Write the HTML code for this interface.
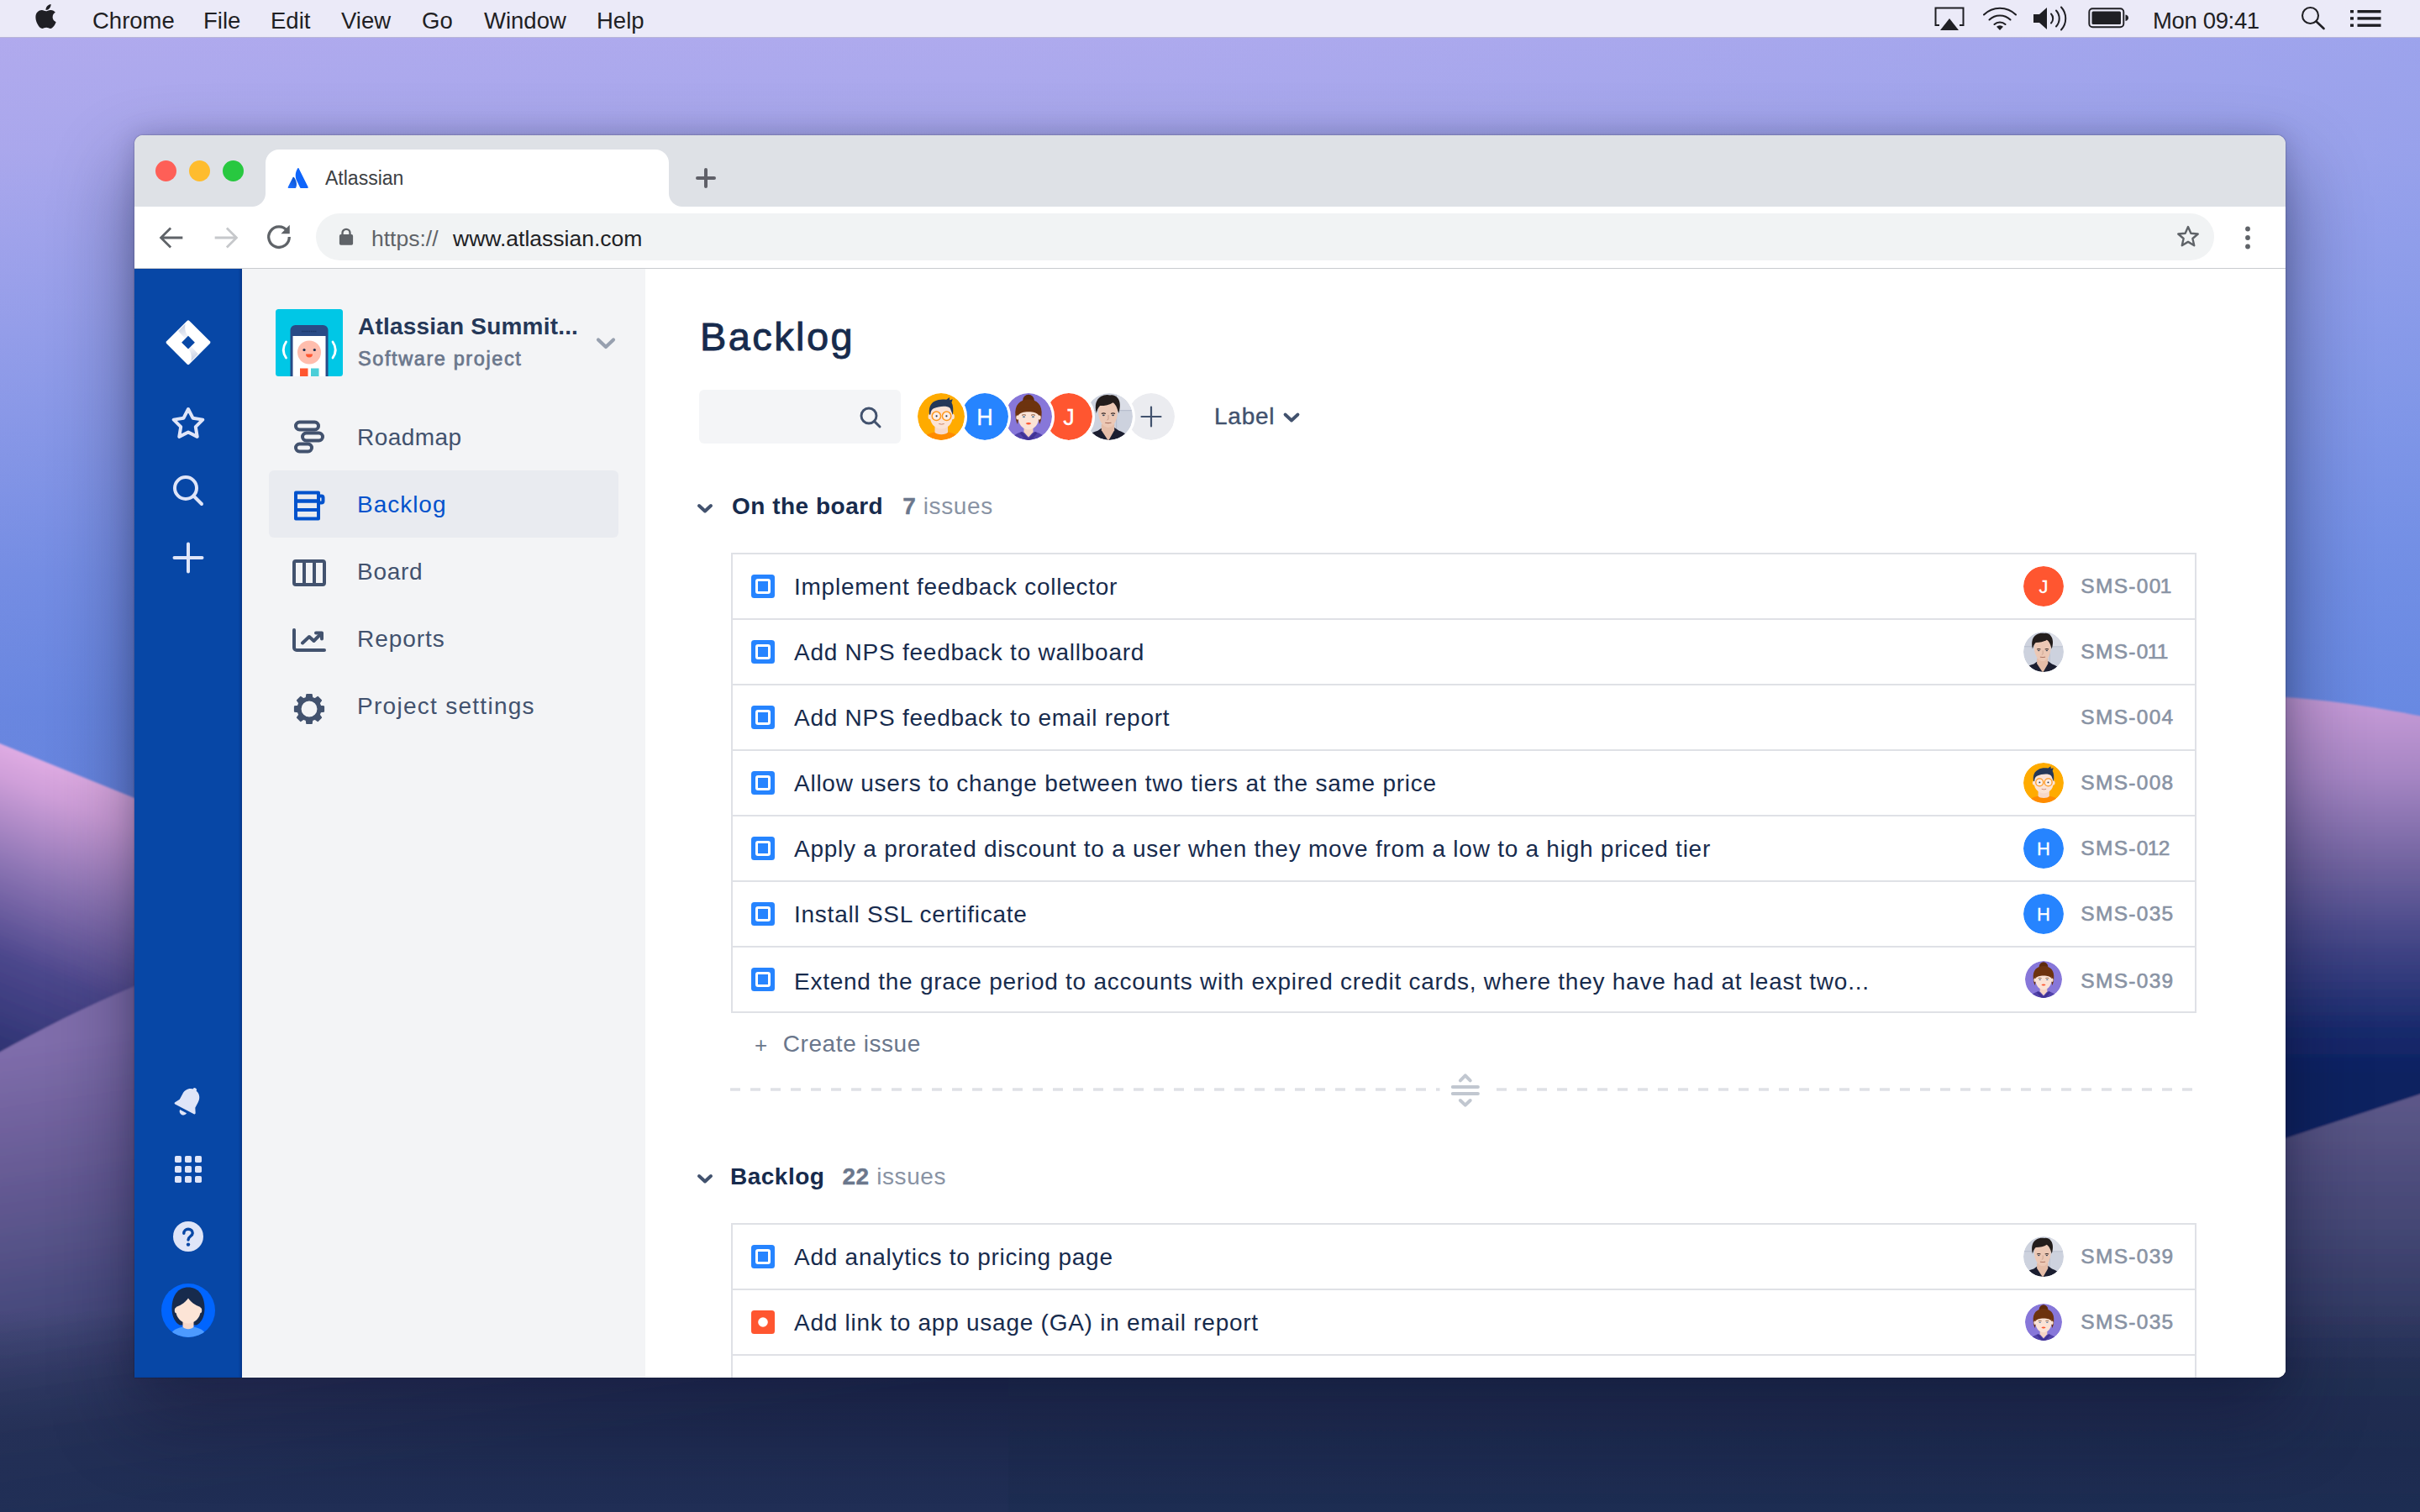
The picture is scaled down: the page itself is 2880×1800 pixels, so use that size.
<!DOCTYPE html>
<html lang="en">
<head>
<meta charset="utf-8">
<title>Atlassian</title>
<style>
*{box-sizing:border-box;margin:0;padding:0}
html,body{width:2880px;height:1800px;overflow:hidden;background:#1c2a4d}
body{font-family:"Liberation Sans",sans-serif;position:relative;color:#172b4d}
.abs{position:absolute}
#wall{position:absolute;left:0;top:0;width:2880px;height:1800px}
/* menubar */
#menubar{position:absolute;left:0;top:0;width:2880px;height:45px;background:#ebeaf8;border-bottom:1px solid #b9b6d8;font-size:27.5px;color:#1f1f24}
#menubar span{position:absolute;top:0;line-height:49px;white-space:nowrap}
/* window */
#win{position:absolute;left:160px;top:161px;width:2560px;height:1479px;border-radius:10px 10px 10px 0;background:#fff;box-shadow:0 44px 90px 6px rgba(14,16,48,.42),0 0 30px rgba(12,14,50,.18),0 0 2px rgba(0,0,0,.45);overflow:hidden}
#tabbar{position:absolute;left:0;top:0;width:2560px;height:85px;background:#dee1e6}
#tab{position:absolute;left:156px;top:17px;width:480px;height:68px;background:#fff;border-radius:16px 16px 0 0}
#tab:before,#tab:after{content:"";position:absolute;bottom:0;width:16px;height:16px}
#tab:before{left:-16px;background:radial-gradient(circle at 0 0,transparent 15.5px,#fff 16.5px)}
#tab:after{right:-16px;background:radial-gradient(circle at 100% 0,transparent 15.5px,#fff 16.5px)}
.tl{position:absolute;top:30px;width:25px;height:25px;border-radius:50%}
#toolbar{position:absolute;left:0;top:85px;width:2560px;height:74px;background:#fff;border-bottom:1px solid #c9cbcf}
#url{position:absolute;left:216px;top:8px;width:2259px;height:56px;border-radius:28px;background:#f1f3f4}
/* page */
#page{position:absolute;left:0;top:159px;width:2560px;height:1320px;background:#fff;overflow:hidden}
#gnav{position:absolute;left:0;top:0;width:128px;height:1320px;background:#0747a6;box-shadow:inset -3px 0 3px -1px rgba(0,20,80,.35)}
#cnav{position:absolute;left:128px;top:0;width:480px;height:1320px;background:#f3f4f6}
#main{position:absolute;left:608px;top:0;width:1952px;height:1320px;background:#fff}

.nv{position:absolute;left:32px;width:416px;height:80px;border-radius:6px;font-size:28px;color:#42526e;letter-spacing:.45px}
.nv span{position:absolute;left:105px;top:0;line-height:81px;white-space:nowrap}
.nv svg{position:absolute;left:24px;top:16px}
.nv.sel{background:#e9ebf0;color:#0052cc}

#main{font-size:28px;letter-spacing:.75px}
.h1{position:absolute;left:65px;top:51px;font-size:47px;line-height:60px;letter-spacing:2.400px;color:#172b4d;-webkit-text-stroke:.9px #172b4d;white-space:nowrap}
.sbox{position:absolute;left:64px;top:144px;width:240px;height:64px;border-radius:6px;background:#f4f5f7}
.avs{position:absolute;top:145px;margin-left:-1px;width:62px;height:62px;border-radius:50%;border:3px solid #fff;background:#fff;overflow:hidden}
.avs svg{display:block;width:56px;height:56px}
.ini{width:56px;height:56px;border-radius:50%;color:#fff;text-align:center;line-height:58px;font-size:27px;letter-spacing:0;-webkit-text-stroke:.3px #fff}
.sec{position:absolute;left:103px;white-space:nowrap;line-height:40px;font-weight:bold;color:#172b4d;letter-spacing:.5px}
.sec i{font-style:normal;font-weight:normal;color:#8993a4;margin-left:23px;letter-spacing:.6px}
.sec i b{color:#6b778c;-webkit-text-stroke:.4px #6b778c;font-weight:bold}
.chev{position:absolute;left:60px}
.tbl{position:absolute;left:102px;width:1744px;border:2px solid #dfe1e6;border-bottom:0}
.row{position:relative;height:78px;border-bottom:2px solid #dfe1e6;white-space:nowrap}
.row .ic{position:absolute;left:22px;top:24px;width:28px;height:28px}
.row .tx{position:absolute;left:73px;top:0;line-height:77px;color:#172b4d}
.row .av{position:absolute;left:1536px;top:14px;width:48px;height:48px;border-radius:50%;overflow:hidden}
.row .av svg{display:block;width:48px;height:48px}
.row .av .ini{width:48px;height:48px;line-height:50px;font-size:22px}
.row .key{position:absolute;left:1604.300px;top:-1px;line-height:77px;font-size:24.500px;color:#8993a4;letter-spacing:1.300px;-webkit-text-stroke:.6px #8993a4}
.row .key i{font-style:normal;margin:0 -1.950px}
.row .av.sm{left:1538px;top:16px;width:44px;height:44px}
.row .av.sm svg{width:44px;height:44px}
</style>
</head>
<body>
<svg id="wall" viewBox="0 0 2880 1800" preserveAspectRatio="none">
<defs>
<linearGradient id="sky" x1="0" y1="0" x2="0" y2="1">
<stop offset="0" stop-color="#b1abee"/><stop offset=".1" stop-color="#a7a7ec"/><stop offset=".25" stop-color="#8698e7"/><stop offset=".38" stop-color="#6888e1"/><stop offset=".47" stop-color="#5a80dd"/><stop offset="1" stop-color="#4f74d4"/>
</linearGradient>
<linearGradient id="tintH" x1="0" y1="0" x2="1" y2="0"><stop offset="0" stop-color="#b9a8ee" stop-opacity=".16"/><stop offset=".4" stop-color="#9aa0ea" stop-opacity="0"/><stop offset="1" stop-color="#7f98ea" stop-opacity=".38"/></linearGradient>
<linearGradient id="hillL" gradientUnits="userSpaceOnUse" x1="0" y1="885" x2="-135" y2="1218">
<stop offset="0" stop-color="#dfabe3"/><stop offset=".1" stop-color="#cf9fd9"/><stop offset=".35" stop-color="#9077b6"/><stop offset=".65" stop-color="#4c478c"/><stop offset="1" stop-color="#29306f"/>
</linearGradient>
<linearGradient id="hillL2" gradientUnits="userSpaceOnUse" x1="0" y1="1250" x2="80" y2="1800">
<stop offset="0" stop-color="#7f6dab"/><stop offset=".25" stop-color="#685c96"/><stop offset=".55" stop-color="#494b7e"/><stop offset=".75" stop-color="#343d69"/><stop offset="1" stop-color="#232f57"/>
</linearGradient>
<linearGradient id="domeR" gradientUnits="userSpaceOnUse" x1="0" y1="830" x2="0" y2="1360">
<stop offset="0" stop-color="#c89cd8"/><stop offset=".18" stop-color="#a585c3"/><stop offset=".38" stop-color="#70639f"/><stop offset=".57" stop-color="#3f4384"/><stop offset=".74" stop-color="#1a2b6d"/><stop offset=".85" stop-color="#0b2161"/><stop offset="1" stop-color="#0b2262"/>
</linearGradient>
<linearGradient id="hillR2" gradientUnits="userSpaceOnUse" x1="0" y1="1290" x2="0" y2="1800">
<stop offset="0" stop-color="#5f598b"/><stop offset=".35" stop-color="#434673"/><stop offset=".68" stop-color="#253157"/><stop offset="1" stop-color="#18294b"/>
</linearGradient>
<linearGradient id="bot" x1="0" y1="0" x2="0" y2="1">
<stop offset="0" stop-color="#1c2747" stop-opacity="0"/><stop offset=".6" stop-color="#1d2a4e" stop-opacity=".6"/><stop offset="1" stop-color="#1f2e55" stop-opacity=".75"/>
</linearGradient>
<filter id="b6" x="-5%" y="-5%" width="110%" height="110%"><feGaussianBlur stdDeviation="1.2"/></filter>
</defs>
<rect width="2880" height="1800" fill="url(#sky)"/><rect width="2880" height="1000" fill="url(#tintH)"/>
<g filter="url(#b6)">
<path d="M-40 869 L160 950 L1500 1494 L1500 1900 L-40 1900Z" fill="url(#hillL)"/>
<path d="M1400 1300 C1700 950 2300 800 2720 830 C2800 836 2850 846 2940 864 L2940 1900 L1400 1900Z" fill="url(#domeR)"/>
<path d="M-40 1275 C20 1240 90 1203 160 1174 C400 1080 1000 1040 1500 1200 L1500 1900 L-40 1900Z" fill="url(#hillL2)"/>
<path d="M1200 1560 C1900 1560 2500 1440 2720 1355 L2940 1283 L2940 1900 L1200 1900Z" fill="url(#hillR2)"/>
</g>
<rect x="0" y="1560" width="2880" height="240" fill="url(#bot)"/>
</svg>

<svg width="0" height="0" style="position:absolute">
<defs>
<clipPath id="c56"><circle cx="28" cy="28" r="28"/></clipPath>
<symbol id="av-glasses" viewBox="0 0 56 56">
 <g clip-path="url(#c56)">
 <rect width="56" height="56" fill="#ffab00"/>
 <path d="M6 56c1-6 8-8 14-9.500h17c6 1.500 13 3.500 14 9.500z" fill="#ff8b00"/>
 <path d="M20.500 38v8.500c2 3.500 13.500 3.500 15.500 0V38z" fill="#f7d9cb"/>
 <ellipse cx="14.800" cy="28" rx="2.200" ry="3.200" fill="#fbe3d6"/><ellipse cx="41.700" cy="28" rx="2.200" ry="3.200" fill="#fbe3d6"/>
 <path d="M15 22c0-8 6-11 13.300-11S41.500 14 41.500 22v7c0 8-6.500 13.500-13.200 13.500S15 37 15 29z" fill="#fbe3d6"/>
 <path d="M14.200 26c-1.500-8 1-14 6.500-16.500 3-2 9-2.500 13.500-1.800l3.800-2.700.2 3.300 3.500-1-1.200 4c1.800 3.200 2.300 8.700 1.400 14.700l-2.200-5.500c-.5-2.500-2-3.700-4.200-4.200-5-1-11-.2-16.500 2-2.500 1.200-3.400 3.700-3.600 7z" fill="#253858"/>
 <circle cx="22.400" cy="27.300" r="5.200" fill="#fff" fill-opacity=".35" stroke="#ff991f" stroke-width="1.500"/><circle cx="34.600" cy="27.300" r="5.200" fill="#fff" fill-opacity=".35" stroke="#ff991f" stroke-width="1.500"/>
 <circle cx="22.600" cy="27.300" r="1.100" fill="#253858"/><circle cx="34.400" cy="27.300" r="1.100" fill="#253858"/>
 <path d="M25.300 36.500q3.200 1.300 6.400 0" fill="none" stroke="#c9826b" stroke-width="1"/>
 </g>
</symbol>
<symbol id="av-bun" viewBox="0 0 56 56">
 <g clip-path="url(#c56)">
 <rect width="56" height="56" fill="#8777d9"/>
 <circle cx="28" cy="8.500" r="6.800" fill="#5e2a0c"/>
 <path d="M12.500 27C11 14 18 7.500 28 7.500S45 14 43.500 27c0 4-1.200 7.500-2.500 10l-1.500-9h-23L15 37c-1.300-2.500-2.500-6-2.500-10z" fill="#6d330f"/>
 <path d="M8 56c1-6 6-8 12-10l8 2 8-2c6 2 11 4 12 10z" fill="#5243aa"/>
 <path d="M22.500 39v7.500l5.500 6 5.500-6V39z" fill="#f5d3c4"/>
 <ellipse cx="15" cy="29" rx="1.800" ry="2.800" fill="#fbe3d6"/><ellipse cx="41" cy="29" rx="1.800" ry="2.800" fill="#fbe3d6"/>
 <path d="M16 24c2-3 6-4 12-4s10 1 12 4v6c0 8-6 13.500-12 13.500S16 38 16 30z" fill="#fbe3d6"/>
 <path d="M15.500 26.500c0-6 3-9.500 12.500-9.500s12.500 3.500 12.500 9.500c-3-3-6-4.300-12.500-4.300s-9.500 1.300-12.500 4.300z" fill="#6d330f"/>
 <ellipse cx="22.500" cy="28.300" rx="1.600" ry="1" fill="#5e7fa0"/><ellipse cx="33.500" cy="28.300" rx="1.600" ry="1" fill="#5e7fa0"/>
 <path d="M20 26.300q2.500-1.300 5 0M31 26.300q2.500-1.300 5 0" fill="none" stroke="#6d330f" stroke-width=".8"/>
 <path d="M24.600 36q3.400-2 6.800 0-3.400 3-6.800 0z" fill="#ff5630"/>
 <path d="M20 46l8 8 8-8 2.500 1.500-7 8.500h-7l-7-8.500z" fill="#403294"/>
 </g>
</symbol>
<symbol id="av-photo" viewBox="0 0 56 56">
 <g clip-path="url(#c56)">
 <rect width="56" height="56" fill="#cdd2de"/>
 <path d="M0 20h56v1.200H0zM36 0h1.200v56H36z" fill="#b9bfce"/><path d="M37 0h19v20H37z" fill="#dadde6"/>
 <g transform="translate(-1.500,0) translate(28 3) scale(1.1) translate(-28 -3)"><path d="M2 56c0-8 6-12.500 15-15l5-3.500h13l5 3.500c7 2 12 7 13 15z" fill="#1b1e30"/>
 <path d="M21 34v6.500l7.500 11.500 6.500-11.500V34z" fill="#e5bda8"/>
 <path d="M17.500 21c0-9 4-13.500 10.800-13.500S39 12 38.500 21c-.3 5-1.300 8.500-3 11.500-1.800 3-4.400 5-7.200 5s-5.600-2-7.400-5c-1.800-3-3.100-6.500-3.400-11.500z" fill="#ecc8b5"/>
 <path d="M15.500 22c-2-8-.5-15 5-18 3-2 7-2.500 10-1.500 2.500-.8 6 .3 8 3 3 3.500 3.300 9.500 1.200 16.500l-1.700-5c-1-3-2.500-5-4.500-6.500-3.500 2.500-8.500 3.500-14 3.500-2 1.800-3 4.500-4 8z" fill="#231d1c"/>
 <path d="M21 22.500q2.300-1 4.600 0M31.200 22.500q2.300-1 4.600 0" fill="none" stroke="#3a2a25" stroke-width="1.100"/>
 <ellipse cx="23.300" cy="24.200" rx="1.300" ry=".8" fill="#3a4658"/><ellipse cx="33.500" cy="24.200" rx="1.300" ry=".8" fill="#3a4658"/><path d="M25 32.300q3.300.8 6.600 0" fill="none" stroke="#a8705f" stroke-width="1"/>
 <path d="M28.500 24v4.500l-1.500 1" fill="none" stroke="#c99f8c" stroke-width=".9"/></g>
 </g>
</symbol>
<symbol id="av-me" viewBox="0 0 64 64">
 <clipPath id="c64"><circle cx="32" cy="32" r="32"/></clipPath>
 <g clip-path="url(#c64)">
 <rect width="64" height="64" fill="#0065ff"/>
 <path d="M12.500 30C12.500 14 20 4.500 32 4.500S51.500 14 51.500 30c0 9-4 17-9.500 19.500H22C16.500 47 12.500 39 12.500 30z" fill="#172b4d"/>
 <path d="M10 64c1-7 6-10 14-12h16c8 2 13 5 14 12z" fill="#4c9aff"/>
 <path d="M25.500 42v9.500c2.500 3.500 10.500 3.500 13 0V42z" fill="#f7d8ca"/>
 <ellipse cx="17.800" cy="32" rx="2" ry="3.200" fill="#fce4d6"/><ellipse cx="46.200" cy="32" rx="2" ry="3.200" fill="#fce4d6"/>
 <path d="M17.500 28c3-1 10-4 14.500-10.500C36.500 24 43.500 27 46.500 28v5c0 8-7 14.500-14.500 14.500S17.500 41 17.500 33z" fill="#fce4d6"/>
 </g>
</symbol>
<symbol id="ic-task" viewBox="0 0 28 28"><rect width="28" height="28" rx="3.500" fill="#2684ff"/><rect x="6.500" y="6.500" width="15" height="15" rx="1.500" fill="none" stroke="#fff" stroke-width="3"/></symbol>
<symbol id="ic-bug" viewBox="0 0 28 28"><rect width="28" height="28" rx="3.500" fill="#ff5630"/><circle cx="14" cy="14" r="5.800" fill="#fff"/></symbol>
</defs>
</svg>
<div id="menubar">
<svg class="abs" style="left:41px;top:4px" width="27" height="33" viewBox="0 0 384 512"><path fill="#1f1f24" transform="translate(0,-16)" d="M318.7 268.700c-.2-36.700 16.400-64.400 50-84.800-18.800-26.900-47.200-41.700-84.700-44.600-35.500-2.800-74.300 20.700-88.500 20.700-15 0-49.400-19.700-76.400-19.700C63.300 141.200 4 184.800 4 273.500q0 39.300 14.400 81.200c12.800 36.700 59 126.700 107.200 125.200 25.200-.6 43-17.900 75.800-17.900 31.800 0 48.300 17.900 76.400 17.900 48.600-.7 90.400-82.500 102.600-119.300-65.200-30.700-61.700-90-61.700-91.900zm-56.600-164.200c27.300-32.400 24.800-61.900 24-72.500-24.100 1.400-52 16.400-67.900 34.900-17.500 19.800-27.800 44.300-25.600 71.900 26.100 2 49.900-11.400 69.500-34.300z"/></svg>
<span style="left:110px">Chrome</span>
<span style="left:242px">File</span>
<span style="left:322px">Edit</span>
<span style="left:406px">View</span>
<span style="left:502px">Go</span>
<span style="left:576px">Window</span>
<span style="left:710px">Help</span>
<!-- airplay -->
<svg class="abs" style="left:2300px;top:6px" width="40" height="32" viewBox="0 0 40 32"><path d="M8 24H3.500V3.500h33V24H32" fill="none" stroke="#1f1f24" stroke-width="2"/><path d="M20 16l11 14H9z" fill="#1f1f24"/></svg>
<!-- wifi -->
<svg class="abs" style="left:2358px;top:6px" width="44" height="32" viewBox="0 0 44 32"><g fill="none" stroke="#1f1f24" stroke-width="2.100" stroke-linecap="round"><path d="M3 11.500a27 27 0 0 1 38 0"/><path d="M9.500 17.500a18 18 0 0 1 25 0"/><path d="M15.500 23a9.500 9.500 0 0 1 13 0"/></g><path d="M22 30l-4-4.200a5.800 5.800 0 0 1 8 0z" fill="#1f1f24"/></svg>
<!-- volume -->
<svg class="abs" style="left:2418px;top:6px" width="48" height="32" viewBox="0 0 48 32"><path d="M2 11h7l9-8v26l-9-8H2z" fill="#1f1f24"/><g fill="none" stroke="#1f1f24" stroke-width="2" stroke-linecap="round"><path d="M23 10.500a8 8 0 0 1 0 11"/><path d="M29 6.500a14 14 0 0 1 0 19"/><path d="M35 2.500a20 20 0 0 1 0 27"/></g></svg>
<!-- battery -->
<svg class="abs" style="left:2485px;top:9px" width="50" height="26" viewBox="0 0 50 26"><rect x="1.300" y="1.300" width="41" height="22" rx="4" fill="none" stroke="#1f1f24" stroke-width="1.900"/><rect x="4.500" y="4.500" width="34.500" height="15.600" rx="1.500" fill="#1f1f24"/><path d="M44.500 8.500c2.600.6 3.500 2 3.500 3.800s-.9 3.200-3.500 3.800z" fill="#1f1f24"/></svg>
<span style="left:2562px;letter-spacing:-.35px">Mon 09:41</span>
<!-- search -->
<svg class="abs" style="left:2737px;top:6px" width="34" height="32" viewBox="0 0 34 32"><circle cx="12.500" cy="12.500" r="9.500" fill="none" stroke="#1f1f24" stroke-width="2.100"/><path d="M19.500 19.500L28.500 28" stroke="#1f1f24" stroke-width="2.600" stroke-linecap="round"/></svg>
<!-- list -->
<svg class="abs" style="left:2796px;top:10px" width="40" height="24" viewBox="0 0 40 24"><g fill="#1f1f24"><rect x="1" y="2" width="4" height="3.400"/><rect x="1" y="10.200" width="4" height="3.400"/><rect x="1" y="18.500" width="4" height="3.400"/><rect x="9.500" y="2" width="28" height="3.400"/><rect x="9.500" y="10.200" width="28" height="3.400"/><rect x="9.500" y="18.500" width="28" height="3.400"/></g></svg>
</div>

<div id="win">
 <div id="tabbar">
  <div class="tl" style="left:25px;background:#fe5f57"></div>
  <div class="tl" style="left:65px;background:#febc2e"></div>
  <div class="tl" style="left:105px;background:#28c840"></div>
  <div id="tab">
   <svg class="abs" style="left:26px;top:21px" width="26" height="26" viewBox="0 0 26 26"><defs><linearGradient id="atl" x1="1" y1="0" x2=".4" y2="1"><stop offset="0" stop-color="#0a4fc2"/><stop offset="1" stop-color="#1a6dff"/></linearGradient></defs><path d="M7.800 12.100c-.4-.5-1-.4-1.300.1L.700 23.800c-.3.500.1 1.200.7 1.200h8.100c.3 0 .5-.1.700-.4 1.700-3.600.6-9.100-2.400-12.500z" fill="url(#atl)"/><path d="M12.200 1.500C8.900 6.600 9.200 12.300 11.300 16.600l3.900 7.900c.1.300.4.500.7.500H24c.6 0 1-.7.700-1.200L13.600 1.500c-.3-.6-1.100-.6-1.400 0z" fill="#0e65fb"/></svg>
   <span class="abs" style="left:71px;top:-1px;line-height:70px;font-size:23px;color:#3c4043;white-space:nowrap">Atlassian</span>
  </div>
  <svg class="abs" style="left:666px;top:37px" width="28" height="28" viewBox="0 0 28 28"><path d="M14 4v20M4 14h20" stroke="#5f6068" stroke-width="4" stroke-linecap="round"/></svg>
 </div>
 <div id="toolbar">
  <svg class="abs" style="left:28px;top:21px" width="32" height="32" viewBox="0 0 36 36"><path d="M17 5L4 18l13 13M4.500 18H33" fill="none" stroke="#5f6368" stroke-width="3.100"/></svg>
  <svg class="abs" style="left:93px;top:21px" width="32" height="32" viewBox="0 0 36 36"><path d="M19 5l13 13-13 13M31.500 18H3" fill="none" stroke="#c6c8cb" stroke-width="3.100"/></svg>
  <svg class="abs" style="left:155px;top:19px" width="34" height="34" viewBox="0 0 36 36"><path d="M28.500 10.500A13 13 0 1 0 31 18" fill="none" stroke="#5f6368" stroke-width="3.500"/><path d="M31.500 3v11h-11z" fill="#5f6368"/></svg>
  <div id="url">
   <svg class="abs" style="left:27px;top:17px" width="18" height="21.600" viewBox="0 0 20 24"><rect x="1" y="9" width="18" height="14" rx="2" fill="#5f6368"/><path d="M5 10V7a5 5 0 0 1 10 0v3" fill="none" stroke="#5f6368" stroke-width="2.600"/></svg>
   <span class="abs" style="left:66px;top:0;line-height:60px;font-size:26.500px;color:#5f6368;white-space:nowrap">https://</span>
   <span class="abs" style="left:163px;top:0;line-height:60px;font-size:26.500px;color:#202124;white-space:nowrap">www.atlassian.com</span>
   <svg class="abs" style="left:2213px;top:12px" width="30" height="30" viewBox="0 0 24 24"><path d="M12 3.200l2.700 6.200 6.700.600-5.100 4.400 1.500 6.600L12 17.500 6.200 21l1.500-6.600-5.100-4.400 6.700-.600z" fill="none" stroke="#5f6368" stroke-width="1.900" stroke-linejoin="round"/></svg>
  </div>
  <svg class="abs" style="left:2508px;top:17px" width="14" height="40" viewBox="0 0 14 40"><g fill="#5f6368"><circle cx="7" cy="9.500" r="2.900"/><circle cx="7" cy="20" r="2.900"/><circle cx="7" cy="30.500" r="2.900"/></g></svg>
 </div>
 <div id="page">
  <div id="gnav">
   <!-- jira logo -->
   <svg class="abs" style="left:36px;top:60px" width="56" height="56" viewBox="-28 -27.700 56 56">
    <defs><linearGradient id="jg1" gradientUnits="userSpaceOnUse" x1="-8" y1="-20" x2="-3" y2="-6"><stop offset="0" stop-color="#c6cfe2"/><stop offset="1" stop-color="#f2f4f9"/></linearGradient>
    <linearGradient id="jg2" gradientUnits="userSpaceOnUse" x1="8" y1="20" x2="3" y2="6"><stop offset="0" stop-color="#c6cfe2"/><stop offset="1" stop-color="#f2f4f9"/></linearGradient></defs>
    <path d="M-1.400 -25.800a2 2 0 0 1 2.800 0L25.800 -1.400a2 2 0 0 1 0 2.800L1.400 25.800a2 2 0 0 1-2.800 0L-25.800 1.400a2 2 0 0 1 0-2.800z" fill="#fff"/>
    <path d="M-.2 -7.600C-3 -11 -4.600 -16 -3.400 -22.300L-11.900 -13.800L-3.400 -4.500z" fill="url(#jg1)"/>
    <path d="M.2 7.600C3 11 4.600 16 3.400 22.300L11.900 13.800L3.400 4.500z" fill="url(#jg2)"/>
    <path d="M0 -7.900L7.900 0 0 7.900-7.900 0z" fill="#0747a6"/>
   </svg>
   <!-- star -->
   <svg class="abs" style="left:40px;top:160px" width="48" height="48" viewBox="0 0 48 48"><path d="M24.0 7.0L29.5 17.700L41.300 19.600L32.800 28.100L34.700 39.900L24.0 34.500L13.300 39.900L15.200 28.100L6.700 19.600L18.500 17.700z" fill="none" stroke="#dfe5f8" stroke-width="4" stroke-linejoin="round"/></svg>
   <!-- search -->
   <svg class="abs" style="left:40px;top:240px" width="48" height="48" viewBox="0 0 48 48"><circle cx="21" cy="21" r="13" fill="none" stroke="#dfe5f8" stroke-width="4"/><path d="M30.500 30.500L40 40" stroke="#dfe5f8" stroke-width="4" stroke-linecap="round"/></svg>
   <!-- plus -->
   <svg class="abs" style="left:40px;top:320px" width="48" height="48" viewBox="0 0 48 48"><path d="M24 7.500v33M7.500 24h33" stroke="#dfe5f8" stroke-width="4" stroke-linecap="round"/></svg>
   <!-- bell -->
   <svg class="abs" style="left:40px;top:968px" width="48" height="48" viewBox="0 0 48 48"><g transform="rotate(28 24 24)" fill="#dfe5f8"><path d="M24 7.500c-6.500 0-10.500 5-10.500 11v7.500l-3.300 5.500c-.5.900 0 2 1.100 2h25.400c1.100 0 1.600-1.100 1.100-2L34.500 26v-7.500c0-6-4-11-10.500-11z"/><path d="M19.500 36.500h9a4.500 4.500 0 0 1-9 0z"/><circle cx="24" cy="7.500" r="2.300"/></g></svg>
   <!-- grid -->
   <svg class="abs" style="left:48px;top:1056px" width="32" height="32" viewBox="0 0 32 32"><g fill="#dfe5f8"><rect x="0" y="0" width="8" height="8" rx="1.800"/><rect x="12" y="0" width="8" height="8" rx="1.800"/><rect x="24" y="0" width="8" height="8" rx="1.800"/><rect x="0" y="12" width="8" height="8" rx="1.800"/><rect x="12" y="12" width="8" height="8" rx="1.800"/><rect x="24" y="12" width="8" height="8" rx="1.800"/><rect x="0" y="24" width="8" height="8" rx="1.800"/><rect x="12" y="24" width="8" height="8" rx="1.800"/><rect x="24" y="24" width="8" height="8" rx="1.800"/></g></svg>
   <!-- help -->
   <svg class="abs" style="left:46px;top:1134px" width="36" height="36" viewBox="0 0 36 36"><circle cx="18" cy="18" r="18" fill="#dfe5f8"/><path d="M12.800 14.300c0-3 2.300-5 5.200-5s5.200 2 5.200 4.700c0 3.800-5.200 3.800-5.200 8" fill="none" stroke="#0747a6" stroke-width="3.400" stroke-linecap="round"/><circle cx="18" cy="27.600" r="2.200" fill="#0747a6"/></svg>
   <!-- me -->
   <svg class="abs" style="left:32px;top:1208px" width="64" height="64"><use href="#av-me"/></svg>
  </div>
  <div id="cnav">
   <!-- project avatar -->
   <svg class="abs" style="left:40px;top:48px" width="80" height="80" viewBox="0 0 80 80">
    <clipPath id="pa"><rect width="80" height="80" rx="3.500"/></clipPath>
    <g clip-path="url(#pa)"><rect width="80" height="80" fill="#00c7e6"/>
    <path d="M17.500 80V25a6 6 0 0 1 6-6h33a6 6 0 0 1 6 6v55z" fill="#2a4b86"/>
    <rect x="20.500" y="32" width="39" height="50" fill="#fff"/>
    <path d="M31 26.500h18" stroke="#1c3666" stroke-width="1.600" stroke-dasharray="1.400 .8"/>
    <circle cx="40" cy="51.500" r="14" fill="#ffbdad"/>
    <circle cx="34" cy="48.500" r="1.600" fill="#172b4d"/><circle cx="46.300" cy="48.500" r="1.600" fill="#172b4d"/>
    <path d="M36 53.500h8a4 4 0 0 1-8 0z" fill="#ff5630"/>
    <path d="M12.500 39q-6.500 9.500 0 19M68 39q6.500 9.500 0 19" fill="none" stroke="#fff" stroke-width="2.800" stroke-linecap="round"/>
    <rect x="29" y="70.500" width="9.500" height="10" fill="#ff5630"/><rect x="42" y="70.500" width="9.500" height="10" fill="#4bced8"/></g>
   </svg>
   <div class="abs" style="left:138px;top:52px;line-height:34px;font-size:28px;font-weight:bold;color:#253858;letter-spacing:.2px;white-space:nowrap">Atlassian Summit...</div>
   <div class="abs" style="left:138px;top:92px;line-height:30px;font-size:23.500px;color:#6b778c;letter-spacing:1.600px;-webkit-text-stroke:.75px #6b778c;white-space:nowrap">Software project</div>
   <svg class="abs" style="left:420px;top:80px" width="26" height="18" viewBox="0 0 26 18"><path d="M4 4.500L13 13l9-8.500" fill="none" stroke="#97a0af" stroke-width="4.200" stroke-linecap="round" stroke-linejoin="round"/></svg>

   <div class="nv" style="top:160px"><svg width="48" height="48" viewBox="0 0 48 48"><g fill="none" stroke="#42526e" stroke-width="4"><rect x="8" y="6.500" width="27" height="9" rx="4.500"/><rect x="16" y="19.500" width="24" height="9" rx="4.500"/><rect x="8" y="32.500" width="19" height="9" rx="4.500"/></g></svg><span>Roadmap</span></div>
   <div class="nv sel" style="top:240px;letter-spacing:.98px"><svg style="top:18px" width="48" height="48" viewBox="0 0 48 48"><g fill="none" stroke="#0052cc" stroke-width="4" stroke-linejoin="round"><path d="M8 8.500h27v10H8z"/><path d="M35 12.500h3.500a2 2 0 0 1 2 2v4a2 2 0 0 1-2 2H35"/><path d="M8 18.500h27v10.500H8zM8 29h27v10.500H8z"/></g></svg><span>Backlog</span></div>
   <div class="nv" style="top:320px;letter-spacing:.7px"><svg style="top:18px" width="48" height="48" viewBox="0 0 48 48"><g fill="none" stroke="#42526e" stroke-width="4" stroke-linejoin="round"><rect x="6" y="10" width="36" height="28" rx="2"/><path d="M18 10v28M30 10v28"/></g></svg><span>Board</span></div>
   <div class="nv" style="top:400px;letter-spacing:.95px"><svg width="48" height="48" viewBox="0 0 48 48"><g fill="none" stroke="#42526e" stroke-width="4" stroke-linecap="round" stroke-linejoin="round"><path d="M6 14v21a3 3 0 0 0 3 3h33"/><path d="M16 29.500l8-7.500 5.500 5 9-9"/><path d="M32 17.500h7v7"/></g></svg><span>Reports</span></div>
   <div class="nv" style="top:480px;letter-spacing:1.280px"><svg style="top:20px" width="48" height="48" viewBox="-24 -24 48 48"><path fill="#42526e" fill-rule="evenodd" stroke="#42526e" stroke-width="1.500" stroke-linejoin="round" d="M-3.57 -13.43 L-2.98 -17.35 L2.98 -17.35 L3.57 -13.43 L6.97 -12.03 L10.16 -14.37 L14.37 -10.16 L12.03 -6.97 L13.43 -3.57 L17.35 -2.98 L17.35 2.98 L13.43 3.57 L12.03 6.97 L14.37 10.16 L10.16 14.37 L6.97 12.03 L3.57 13.43 L2.98 17.35 L-2.98 17.35 L-3.57 13.43 L-6.97 12.03 L-10.16 14.37 L-14.37 10.16 L-12.03 6.97 L-13.43 3.57 L-17.35 2.98 L-17.35 -2.98 L-13.43 -3.57 L-12.03 -6.97 L-14.37 -10.16 L-10.16 -14.37 L-6.97 -12.03Z M0 -10.200a10.200 10.200 0 1 0 0 20.400a10.200 10.200 0 1 0 0-20.400z"/></svg><span>Project settings</span></div>
  </div>
  <div id="main">
   <div class="h1">Backlog</div>
   <div class="sbox"><svg class="abs" style="left:188px;top:17px" width="32" height="32" viewBox="0 0 32 32"><circle cx="14" cy="14" r="9" fill="none" stroke="#42526e" stroke-width="2.900"/><path d="M20.600 20.600l6.400 6.400" stroke="#42526e" stroke-width="2.900" stroke-linecap="round"/></svg></div>
   <div class="avs" style="left:322px;z-index:6"><svg><use href="#av-glasses"/></svg></div>
   <div class="avs" style="left:374px;z-index:5"><div class="ini" style="background:#2684ff">H</div></div>
   <div class="avs" style="left:426px;z-index:4"><svg><use href="#av-bun"/></svg></div>
   <div class="avs" style="left:474px;z-index:3"><div class="ini" style="background:#ff5630">J</div></div>
   <div class="avs" style="left:522px;z-index:2"><svg><use href="#av-photo"/></svg></div>
   <div class="avs" style="left:572px;z-index:1"><div class="ini" style="background:#ebecf0;position:relative"><svg style="position:absolute;left:14px;top:14px;width:28px;height:28px" viewBox="0 0 28 28"><path d="M14 2.500v23M2.500 14h23" stroke="#42526e" stroke-width="2.200" stroke-linecap="round"/></svg></div></div>
   <div class="abs" style="left:677px;top:156px;line-height:40px;color:#42526e;white-space:nowrap;-webkit-text-stroke:.4px #42526e">Label</div>
   <svg class="abs" style="left:758px;top:168px" width="22" height="18" viewBox="0 0 22 18"><path d="M3.500 5.500L11 12.500l7.500-7" fill="none" stroke="#42526e" stroke-width="3.800" stroke-linecap="round" stroke-linejoin="round"/></svg>

   <svg class="chev" style="top:276px" width="22" height="18" viewBox="0 0 22 18"><path d="M4 6l7 6.500L18 6" fill="none" stroke="#42526e" stroke-width="4" stroke-linecap="round" stroke-linejoin="round"/></svg>
   <div class="sec" style="top:263px">On the board<i><b>7</b> issues</i></div>
   <div class="tbl" style="top:338px"><div class="row"><svg class="ic"><use href="#ic-task"/></svg><span class="tx">Implement feedback collector</span><div class="av"><div class="ini" style="background:#ff5630">J</div></div><span class="key">SMS-00<i>1</i></span></div>
    <div class="row"><svg class="ic"><use href="#ic-task"/></svg><span class="tx">Add NPS feedback to wallboard</span><div class="av"><svg><use href="#av-photo"/></svg></div><span class="key">SMS-0<i>1</i><i>1</i></span></div>
    <div class="row"><svg class="ic"><use href="#ic-task"/></svg><span class="tx">Add NPS feedback to email report</span><span class="key">SMS-004</span></div>
    <div class="row"><svg class="ic"><use href="#ic-task"/></svg><span class="tx">Allow users to change between two tiers at the same price</span><div class="av"><svg><use href="#av-glasses"/></svg></div><span class="key">SMS-008</span></div>
    <div class="row"><svg class="ic"><use href="#ic-task"/></svg><span class="tx">Apply a prorated discount to a user when they move from a low to a high priced tier</span><div class="av"><div class="ini" style="background:#2684ff">H</div></div><span class="key">SMS-0<i>1</i>2</span></div>
    <div class="row"><svg class="ic"><use href="#ic-task"/></svg><span class="tx">Install SSL certificate</span><div class="av"><div class="ini" style="background:#2684ff">H</div></div><span class="key">SMS-035</span></div>
    <div class="row"><svg class="ic"><use href="#ic-task"/></svg><span class="tx" style="top:2px">Extend the grace period to accounts with expired credit cards, where they have had at least two...</span><div class="av sm"><svg><use href="#av-bun"/></svg></div><span class="key" style="top:.5px">SMS-039</span></div></div>
   <div class="abs" style="left:130px;top:903px;line-height:40px;color:#6b778c;white-space:nowrap;letter-spacing:.58px"><span style="font-size:26px;margin-right:18px;position:relative;top:1px">+</span>Create issue</div>
   <svg class="abs" style="left:101px;top:974px" width="1746" height="6"><path d="M0 3h1745" stroke="#dfe1e6" stroke-width="3.600" stroke-dasharray="12 12"/><rect x="844.500" y="0" width="67.500" height="6" fill="#fff"/></svg>
   <svg class="abs" style="left:956px;top:952px" width="40" height="52" viewBox="0 0 40 52"><g fill="none" stroke="#c1c7d0" stroke-width="4" stroke-linecap="round" stroke-linejoin="round"><path d="M13.900 14.300l5.900-5.900 5.900 5.900M4.800 22h30.100M4.800 30h30.100M13.900 38l5.900 5.600 5.900-5.600"/></g></svg>
   <svg class="chev" style="top:1074px" width="22" height="18" viewBox="0 0 22 18"><path d="M4 6l7 6.500L18 6" fill="none" stroke="#42526e" stroke-width="4" stroke-linecap="round" stroke-linejoin="round"/></svg>
   <div class="sec" style="top:1061px;left:101px">Backlog<i style="margin-left:21px"><b>22</b> issues</i></div>
   <div class="tbl" style="top:1136px"><div class="row"><svg class="ic"><use href="#ic-task"/></svg><span class="tx">Add analytics to pricing page</span><div class="av"><svg><use href="#av-photo"/></svg></div><span class="key">SMS-039</span></div>
    <div class="row"><svg class="ic"><use href="#ic-bug"/></svg><span class="tx">Add link to app usage (GA) in email report</span><div class="av sm"><svg><use href="#av-bun"/></svg></div><span class="key">SMS-035</span></div>
    <div class="row"></div></div>
 </div>
</div>
</body>
</html>
